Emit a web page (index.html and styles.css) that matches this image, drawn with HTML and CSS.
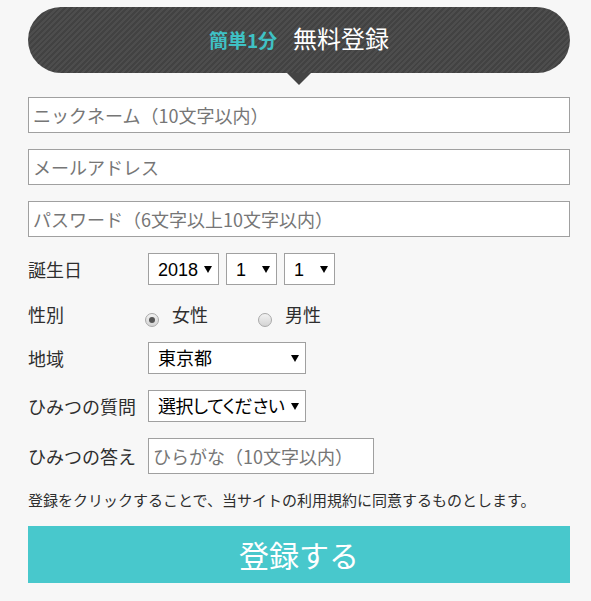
FILE: index.html
```html
<!DOCTYPE html>
<html lang="ja">
<head>
<meta charset="utf-8">
<title>無料登録</title>
<link rel="stylesheet" href="styles.css">
</head>
<body>
<div class="page">
  <div class="banner">
    <span class="banner-sub">簡単1分</span>
    <span class="banner-main">無料登録</span>
  </div>
  <form class="form">
    <input class="field" type="text" placeholder="ニックネーム（10文字以内）">
    <input class="field" type="text" placeholder="メールアドレス">
    <input class="field" type="password" placeholder="パスワード（6文字以上10文字以内）">

    <div class="row">
      <span class="label">誕生日</span>
      <div class="controls">
        <span class="select select-year"><select><option>2018</option></select></span>
        <span class="select select-small"><select><option>1</option></select></span>
        <span class="select select-small"><select><option>1</option></select></span>
      </div>
    </div>

    <div class="row row-gender">
      <span class="label">性別</span>
      <div class="radios">
        <label class="option"><input class="radio" type="radio" name="sex" checked><span>女性</span></label>
        <label class="option"><input class="radio" type="radio" name="sex"><span>男性</span></label>
      </div>
    </div>

    <div class="row">
      <span class="label">地域</span>
      <span class="select select-wide"><select><option>東京都</option></select></span>
    </div>

    <div class="row">
      <span class="label">ひみつの質問</span>
      <span class="select select-wide select-tight"><select><option>選択してください</option></select></span>
    </div>

    <div class="row">
      <span class="label">ひみつの答え</span>
      <input class="field field-answer" type="text" placeholder="ひらがな（10文字以内）">
    </div>

    <p class="terms">登録をクリックすることで、当サイトの利用規約に同意するものとします。</p>

    <button class="submit" type="button">登録する</button>
  </form>
</div>
</body>
</html>
```
FILE: styles.css
```css
* { box-sizing: border-box; }

html, body {
  margin: 0;
  padding: 0;
  background: #f7f7f7;
}

body {
  font-family: "Noto Sans CJK JP", "Noto Sans", sans-serif;
  color: #333;
}

.page {
  width: 542px;
  margin-left: 28px;
  padding-top: 7px;
}

.banner {
  position: relative;
  height: 66px;
  border-radius: 33px;
  background-color: #454545;
  background-image: repeating-linear-gradient(135deg, #4d4d4d 0 2px, #424242 2px 4px);
  display: flex;
  align-items: baseline;
  justify-content: center;
  gap: 16px;
  padding-top: 16px;
}

.banner::after {
  content: "";
  position: absolute;
  left: 50%;
  bottom: -12px;
  margin-left: -12px;
  border-left: 12px solid transparent;
  border-right: 12px solid transparent;
  border-top: 12px solid #444;
}

.banner-sub {
  color: #3fc1c5;
  font-weight: 700;
  font-size: 19px;
  line-height: 24px;
}

.banner-main {
  color: #fff;
  font-size: 24px;
  line-height: 30px;
}

.form {
  display: flex;
  flex-direction: column;
  gap: 16px;
  margin: 24px 0 0;
}

.field {
  display: block;
  width: 100%;
  height: 36px;
  margin: 0;
  border: 1px solid #a0a0a0;
  border-radius: 0;
  background: #fff;
  padding: 0 4px;
  font-family: "Noto Sans CJK JP", sans-serif;
  font-size: 18px;
  color: #333;
  outline: none;
}

.field::placeholder {
  color: #767676;
}

.row {
  display: flex;
  align-items: center;
}

.label {
  flex: 0 0 120px;
  font-size: 18px;
  line-height: 24px;
  color: #2e2e2e;
}

.controls {
  display: flex;
  gap: 7px;
}

.select {
  position: relative;
  display: block;
}

.select::after {
  content: "";
  position: absolute;
  right: 7px;
  top: 13px;
  border-left: 4px solid transparent;
  border-right: 4px solid transparent;
  border-top: 7px solid #000;
  pointer-events: none;
}

.select select {
  display: block;
  appearance: none;
  -webkit-appearance: none;
  height: 32px;
  width: 100%;
  margin: 0;
  border: 1px solid #a0a0a0;
  border-radius: 0;
  background: #fff;
  padding: 2px 0 0 9px;
  font-family: "Liberation Sans", "Noto Sans CJK JP", sans-serif;
  font-size: 18px;
  font-feature-settings: "palt";
  color: #000;
  outline: none;
}

.select-tight select {
  letter-spacing: -0.5px;
}

.select-year { width: 71px; }
.select-small { width: 51px; }
.select-wide { width: 158px; }

.row-gender {
  height: 25px;
}

.radios {
  display: flex;
  gap: 50px;
  margin-left: -3px;
}

.option {
  display: flex;
  align-items: center;
  gap: 13px;
  font-size: 18px;
  line-height: 24px;
  color: #2e2e2e;
}

.radio {
  appearance: none;
  -webkit-appearance: none;
  width: 14px;
  height: 14px;
  margin: 12px 0 0;
  border: 1px solid #a9a9a9;
  border-radius: 50%;
  background: linear-gradient(#f2f2f2, #d4d4d4);
  display: grid;
  place-items: center;
}

.radio:checked::before {
  content: "";
  width: 6px;
  height: 6px;
  border-radius: 50%;
  background: #555;
}

.field-answer {
  width: 226px;
}

.terms {
  margin: 0;
  font-size: 15px;
  line-height: 20px;
  color: #2e2e2e;
  white-space: nowrap;
}

.submit {
  display: block;
  width: 100%;
  height: 57px;
  border: 0;
  margin: 0;
  background: #48c8cc;
  color: #fff;
  font-family: "Noto Sans CJK JP", sans-serif;
  font-size: 30px;
  line-height: 57px;
  padding: 0;
}
```
